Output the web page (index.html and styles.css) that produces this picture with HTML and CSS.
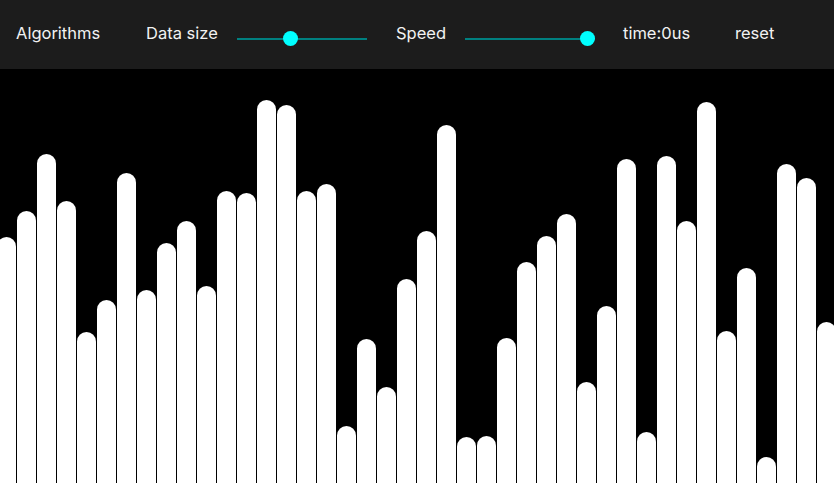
FILE: index.html
```html
<!DOCTYPE html>
<html lang="en">
<head>
<meta charset="utf-8">
<title>Sorting Visualizer</title>
<link rel="stylesheet" href="styles.css">
</head>
<body>
<header class="toolbar">
  <span class="item item-algo">Algorithms</span>
  <span class="item item-size">Data size</span>
  <input class="slider slider-size" type="range" min="0" max="100" value="40">
  <span class="item item-speed">Speed</span>
  <input class="slider slider-speed" type="range" min="0" max="100" value="100">
  <span class="item item-time">time:0us</span>
  <span class="item item-reset">reset</span>
</header>
<main class="bars">
  <div class="bar" style="height:246px"></div>
  <div class="bar" style="height:272px"></div>
  <div class="bar" style="height:329px"></div>
  <div class="bar" style="height:282px"></div>
  <div class="bar" style="height:151px"></div>
  <div class="bar" style="height:183px"></div>
  <div class="bar" style="height:310px"></div>
  <div class="bar" style="height:193px"></div>
  <div class="bar" style="height:240px"></div>
  <div class="bar" style="height:262px"></div>
  <div class="bar" style="height:197px"></div>
  <div class="bar" style="height:292px"></div>
  <div class="bar" style="height:290px"></div>
  <div class="bar" style="height:383px"></div>
  <div class="bar" style="height:378px"></div>
  <div class="bar" style="height:292px"></div>
  <div class="bar" style="height:299px"></div>
  <div class="bar" style="height:57px"></div>
  <div class="bar" style="height:144px"></div>
  <div class="bar" style="height:96px"></div>
  <div class="bar" style="height:204px"></div>
  <div class="bar" style="height:252px"></div>
  <div class="bar" style="height:358px"></div>
  <div class="bar" style="height:46px"></div>
  <div class="bar" style="height:47px"></div>
  <div class="bar" style="height:145px"></div>
  <div class="bar" style="height:221px"></div>
  <div class="bar" style="height:247px"></div>
  <div class="bar" style="height:269px"></div>
  <div class="bar" style="height:101px"></div>
  <div class="bar" style="height:177px"></div>
  <div class="bar" style="height:324px"></div>
  <div class="bar" style="height:51px"></div>
  <div class="bar" style="height:327px"></div>
  <div class="bar" style="height:262px"></div>
  <div class="bar" style="height:381px"></div>
  <div class="bar" style="height:152px"></div>
  <div class="bar" style="height:215px"></div>
  <div class="bar" style="height:26px"></div>
  <div class="bar" style="height:319px"></div>
  <div class="bar" style="height:305px"></div>
  <div class="bar" style="height:161px"></div>
</main>
</body>
</html>
```

FILE: styles.css
```css
html, body {
  margin: 0;
  padding: 0;
  background: #000;
  overflow: hidden;
}

body {
  width: 834px;
  height: 483px;
  display: flex;
  flex-direction: column;
  font-family: Inter, "Noto Sans", sans-serif;
}

.toolbar {
  height: 69px;
  flex: none;
  background: #1c1c1c;
  display: flex;
  align-items: center;
  padding-left: 16px;
  box-sizing: border-box;
  color: #f2f2f2;
  font-size: 16.5px;
}

.item {
  display: block;
  white-space: nowrap;
  line-height: 20px;
  padding-bottom: 3px;
}

.item-algo { width: 130px; }
.item-size { width: 91px; }
.item-speed { width: 69px; }
.item-time { width: 112px; }

.slider {
  -webkit-appearance: none;
  appearance: none;
  width: 130px;
  height: 16px;
  margin: 8px 0 0 0;
  padding: 0;
  background: transparent;
}

.slider-size { margin-right: 29px; }
.slider-speed { margin-right: 28px; }

.slider::-webkit-slider-runnable-track {
  height: 2px;
  background: #008080;
  border: none;
}

.slider::-webkit-slider-thumb {
  -webkit-appearance: none;
  appearance: none;
  width: 15px;
  height: 15px;
  border-radius: 50%;
  background: #00ffff;
  border: none;
  margin-top: -6.5px;
}

.bars {
  flex: 1;
  display: flex;
  align-items: flex-end;
  justify-content: center;
  gap: 1px;
  padding-right: 1px;
  overflow: hidden;
}

.bar {
  flex: none;
  width: 19px;
  background: #fff;
  border-radius: 9.5px 9.5px 0 0;
}
```
